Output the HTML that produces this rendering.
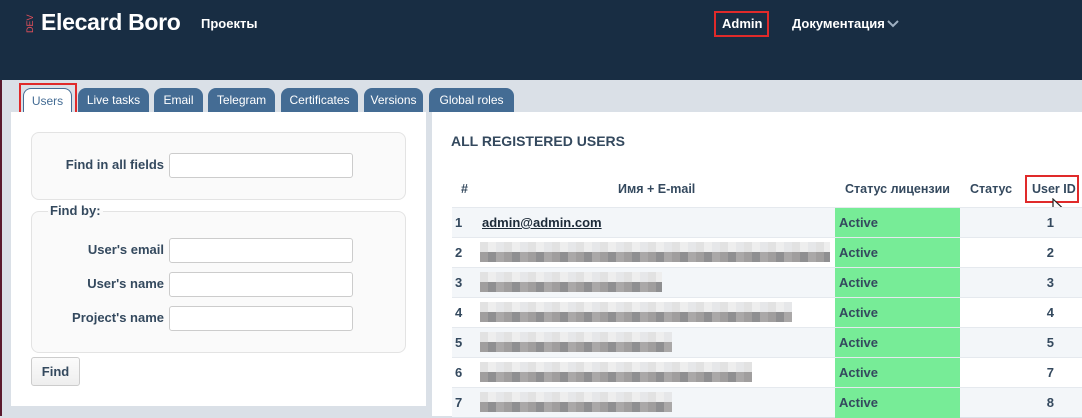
<!DOCTYPE html>
<html><head><meta charset="utf-8"><style>
*{box-sizing:border-box;margin:0;padding:0}
body{width:1082px;height:416px;overflow:hidden;background:#dae0e7;font-family:"Liberation Sans",sans-serif;color:#34495e;position:relative}
.a{position:absolute}
.hdr{left:0;top:0;width:1082px;height:80px;background:#182d43}
.tab{position:absolute;top:88px;height:24px;background:#446c94;color:#fff;font-size:12px;border-radius:8px 8px 0 0;text-align:center;line-height:24px}
.lbl{position:absolute;font-size:13px;font-weight:bold;text-align:right;width:150px;left:14px}
.inp{position:absolute;left:169px;width:184px;height:25px;border:1px solid #ccc;border-radius:3px;background:#fff}
.row{position:absolute;left:452px;width:630px;height:30px;border-top:1px solid #e5e9ee;font-size:13px;font-weight:bold;line-height:30px}
.row .n{position:absolute;left:3px}
.row .g{position:absolute;left:383px;width:125px;top:0;height:30px;background:#77ec97;padding-left:4px}
.row .id{position:absolute;right:0;width:60px;text-align:right;padding-right:28px}
.b1,.b2{position:absolute;left:28px}
.b1{top:4px;height:10px;background:repeating-linear-gradient(90deg,#e2e2e2 0 8px,#eeeeee 8px 16px,#e6e7e9 16px 24px)}
.b2{top:14px;height:10px;background:repeating-linear-gradient(90deg,#a09e9e 0 8px,#8f8f91 8px 16px,#aaa8a8 16px 24px)}
.odd{background:#f3f6f9}
</style></head><body>
<div class="a" style="left:0;top:0;width:2px;height:416px;background:#5a1a2e"></div>
<div class="a hdr"></div>
<div class="a" style="left:25px;color:#e8505b;font-size:9px;transform:rotate(-90deg);transform-origin:left top;top:33px">DEV</div>
<div class="a" style="left:41px;top:9px;color:#fff;font-size:23px;font-weight:bold;letter-spacing:-0.3px">Elecard Boro</div>
<div class="a" style="left:201px;top:16px;color:#fff;font-size:13px;font-weight:bold">Проекты</div>
<div class="a" style="left:714px;top:11px;width:55px;height:26px;border:2px solid #e02a2a"></div>
<div class="a" style="left:722px;top:16px;color:#fff;font-size:13px;font-weight:bold">Admin</div>
<div class="a" style="left:792px;top:16px;color:#fff;font-size:13px;font-weight:bold">Документация</div>
<svg class="a" style="left:887px;top:20px" width="12" height="8"><path d="M1 1 L6 6 L11 1" stroke="#9fb0c2" stroke-width="2" fill="none"/></svg>

<div class="tab" style="left:23px;width:49px;background:#fff;color:#446c94;border:1px solid #446c94;border-bottom:none">Users</div>
<div class="a" style="left:19px;top:83px;width:58px;height:31px;border:2px solid #e02a2a"></div>
<div class="tab" style="left:78px;width:71px">Live tasks</div>
<div class="tab" style="left:154px;width:49px">Email</div>
<div class="tab" style="left:208px;width:67px">Telegram</div>
<div class="tab" style="left:281px;width:77px">Certificates</div>
<div class="tab" style="left:364px;width:59px">Versions</div>
<div class="tab" style="left:429px;width:85px">Global roles</div>

<div class="a" style="left:11px;top:112px;width:415px;height:294px;background:#fff"></div>
<div class="a" style="left:31px;top:132px;width:375px;height:68px;background:#fafafa;border:1px solid #e3e3e3;border-radius:8px"></div>
<div class="lbl" style="top:157px">Find in all fields</div>
<div class="inp" style="top:153px"></div>
<div class="a" style="left:31px;top:211px;width:375px;height:142px;background:#fafafa;border:1px solid #e3e3e3;border-radius:8px"></div>
<div class="a" style="left:48px;top:203px;font-size:13px;font-weight:bold;padding:0 2px;background:linear-gradient(#fff 50%,#fafafa 50%)">Find by:</div>
<div class="lbl" style="top:242px">User's email</div><div class="inp" style="top:238px"></div>
<div class="lbl" style="top:276px">User's name</div><div class="inp" style="top:272px"></div>
<div class="lbl" style="top:310px">Project's name</div><div class="inp" style="top:306px"></div>
<div class="a" style="left:31px;top:357px;width:49px;height:29px;border:1px solid #ccc;border-radius:3px;background:linear-gradient(#fbfbfb,#eee);font-size:13px;font-weight:bold;text-align:center;line-height:27px">Find</div>

<div class="a" style="left:432px;top:112px;width:650px;height:304px;background:#fff"></div>
<div class="a" style="left:451px;top:133px;font-size:14px;font-weight:bold">ALL REGISTERED USERS</div>
<div class="a" style="left:452px;top:182px;width:630px;font-size:12.5px;font-weight:bold">
<span class="a" style="left:9px">#</span>
<span class="a" style="left:166px">Имя + E-mail</span>
<span class="a" style="left:393px">Статус лицензии</span>
<span class="a" style="left:518px">Статус</span>
<span class="a" style="left:580px">User ID</span>
</div>
<div class="a" style="left:1025px;top:175px;width:54px;height:28px;border:2px solid #e02a2a"></div>
<svg class="a" style="left:1052px;top:198px" width="14" height="20"><path d="M1 1 L1 15 L4.5 12 L7 18 L9.5 17 L7 11.5 L12 11.5 Z" fill="#fff" stroke="#222" stroke-width="1.2"/></svg>

<div class="row odd" style="top:207px"><span class="n">1</span><span class="a" style="left:30px;text-decoration:underline;color:#1c2a38">admin@admin.com</span><div class="g">Active</div><span class="id">1</span></div>
<div class="row" style="top:237px"><span class="n">2</span><div class="b1" style="width:350px"></div><div class="b2" style="width:350px"></div><div class="g">Active</div><span class="id">2</span></div>
<div class="row odd" style="top:267px"><span class="n">3</span><div class="b1" style="width:182px"></div><div class="b2" style="width:182px"></div><div class="g">Active</div><span class="id">3</span></div>
<div class="row" style="top:297px"><span class="n">4</span><div class="b1" style="width:312px"></div><div class="b2" style="width:312px"></div><div class="g">Active</div><span class="id">4</span></div>
<div class="row odd" style="top:327px"><span class="n">5</span><div class="b1" style="width:192px"></div><div class="b2" style="width:192px"></div><div class="g">Active</div><span class="id">5</span></div>
<div class="row" style="top:357px"><span class="n">6</span><div class="b1" style="width:272px"></div><div class="b2" style="width:272px"></div><div class="g">Active</div><span class="id">7</span></div>
<div class="row odd" style="top:387px"><span class="n">7</span><div class="b1" style="width:192px"></div><div class="b2" style="width:192px"></div><div class="g">Active</div><span class="id">8</span></div>
</body></html>
